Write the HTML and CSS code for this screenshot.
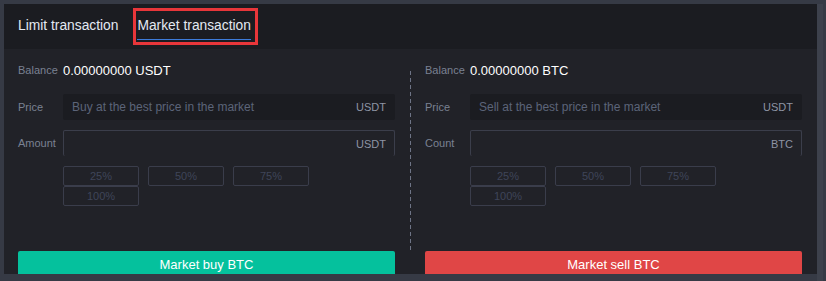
FILE: index.html
```html
<!DOCTYPE html>
<html lang="en">

<head>
    <meta charset="UTF-8">
    <meta name="viewport" content="width=device-width, initial-scale=1.0">
    <title>Market transaction</title>
    <link rel="stylesheet" href="styles.css">
</head>

<body>
    <div class="page">
        <div class="panel">
            <div class="tabs">
                <span class="tab">Limit transaction</span>
                <span class="tab active">Market transaction</span>
            </div>
            <div class="trade">
                <div class="side">
                    <div class="row balance">
                        <span class="label">Balance</span>
                        <span class="value">0.00000000 USDT</span>
                    </div>
                    <div class="row field">
                        <span class="label">Price</span>
                        <div class="input filled">
                            <span class="hint">Buy at the best price in the market</span>
                            <span class="unit">USDT</span>
                        </div>
                    </div>
                    <div class="row field">
                        <span class="label">Amount</span>
                        <div class="input open">
                            <span class="hint"></span>
                            <span class="unit">USDT</span>
                        </div>
                    </div>
                    <div class="percents">
                        <button>25%</button>
                        <button>50%</button>
                        <button>75%</button>
                        <button>100%</button>
                    </div>
                    <button class="submit buy">Market buy BTC</button>
                </div>
                <div class="divider"></div>
                <div class="side">
                    <div class="row balance">
                        <span class="label">Balance</span>
                        <span class="value">0.00000000 BTC</span>
                    </div>
                    <div class="row field">
                        <span class="label">Price</span>
                        <div class="input filled">
                            <span class="hint">Sell at the best price in the market</span>
                            <span class="unit">USDT</span>
                        </div>
                    </div>
                    <div class="row field">
                        <span class="label">Count</span>
                        <div class="input open">
                            <span class="hint"></span>
                            <span class="unit">BTC</span>
                        </div>
                    </div>
                    <div class="percents">
                        <button>25%</button>
                        <button>50%</button>
                        <button>75%</button>
                        <button>100%</button>
                    </div>
                    <button class="submit sell">Market sell BTC</button>
                </div>
            </div>
        </div>
        <div class="scroll"></div>
    </div>
</body>
</html>
```

FILE: styles.css
```css
*{
    box-sizing: border-box;
}
body{
    margin: 0;
    background: #363a45;
    font-family: "Liberation Sans", Arial, sans-serif;
}
.page{
    display: flex;
    padding: 4px 0 0 4px;
    height: 281px;
}
.panel{
    width: 813px;
    height: 270px;
    background: #212228;
    overflow: hidden;
}
.scroll{
    width: 6px;
    height: 277px;
    background: #3d414c;
}

/* tabs */
.tabs{
    display: flex;
    align-items: center;
    height: 45px;
    padding-left: 14px;
    background: #1b1c21;
}
.tab{
    position: relative;
    margin-right: 19px;
    padding: 5px 0;
    font-size: 13.8px;
    line-height: 16px;
    color: #e4e9f2;
    border-bottom: 1px solid transparent;
}
.tab.active{
    border-bottom-color: #3d7bd9;
}
.tab.active::before{
    content: "";
    position: absolute;
    top: -5px;
    left: -4px;
    right: -7px;
    bottom: -6px;
    border: 3px solid #e8363a;
}

/* two sides */
.trade{
    display: flex;
    padding: 12px 14px 0 14px;
}
.side{
    width: 377px;
}
.divider{
    width: 30px;
    margin-top: 10px;
    height: 180px;
    background: repeating-linear-gradient(to bottom, #6e7486 0 4px, transparent 4px 7px) no-repeat center / 1px 100%;
}
.row{
    display: flex;
    align-items: center;
}
.label{
    width: 45px;
    flex-shrink: 0;
    font-size: 11px;
    color: #7a8192;
}
.balance{
    height: 18px;
}
.balance .value{
    font-size: 13px;
    color: #ffffff;
}
.field{
    margin-top: 15px;
}
.field + .field{
    margin-top: 10px;
}
.input{
    flex: 1;
    display: flex;
    justify-content: space-between;
    align-items: center;
    height: 26px;
    padding: 0 9px;
    border-radius: 2px;
}
.input.filled{
    background: #1b1c21;
}
.input.open{
    border: 1px solid #3b3e4b;
    border-bottom: none;
    padding: 0 8px;
}
.hint{
    font-size: 12px;
    color: #5c6479;
}
.unit{
    font-size: 11px;
    color: #8e94a4;
}

/* percents */
.percents{
    display: grid;
    grid-template-columns: repeat(3, 76px);
    column-gap: 9px;
    margin: 10px 0 0 45px;
}
.percents button{
    height: 20px;
    padding: 0;
    background: transparent;
    border: 1px solid #3a3d4b;
    border-radius: 2px;
    font-family: inherit;
    font-size: 11px;
    color: #3f4559;
}

.submit{
    display: block;
    width: 100%;
    height: 26px;
    margin-top: 45px;
    border: none;
    border-radius: 2px;
    font-family: inherit;
    font-size: 13px;
    color: #ffffff;
}
.buy{
    background: #05c19d;
}
.sell{
    background: #e04646;
}
```
